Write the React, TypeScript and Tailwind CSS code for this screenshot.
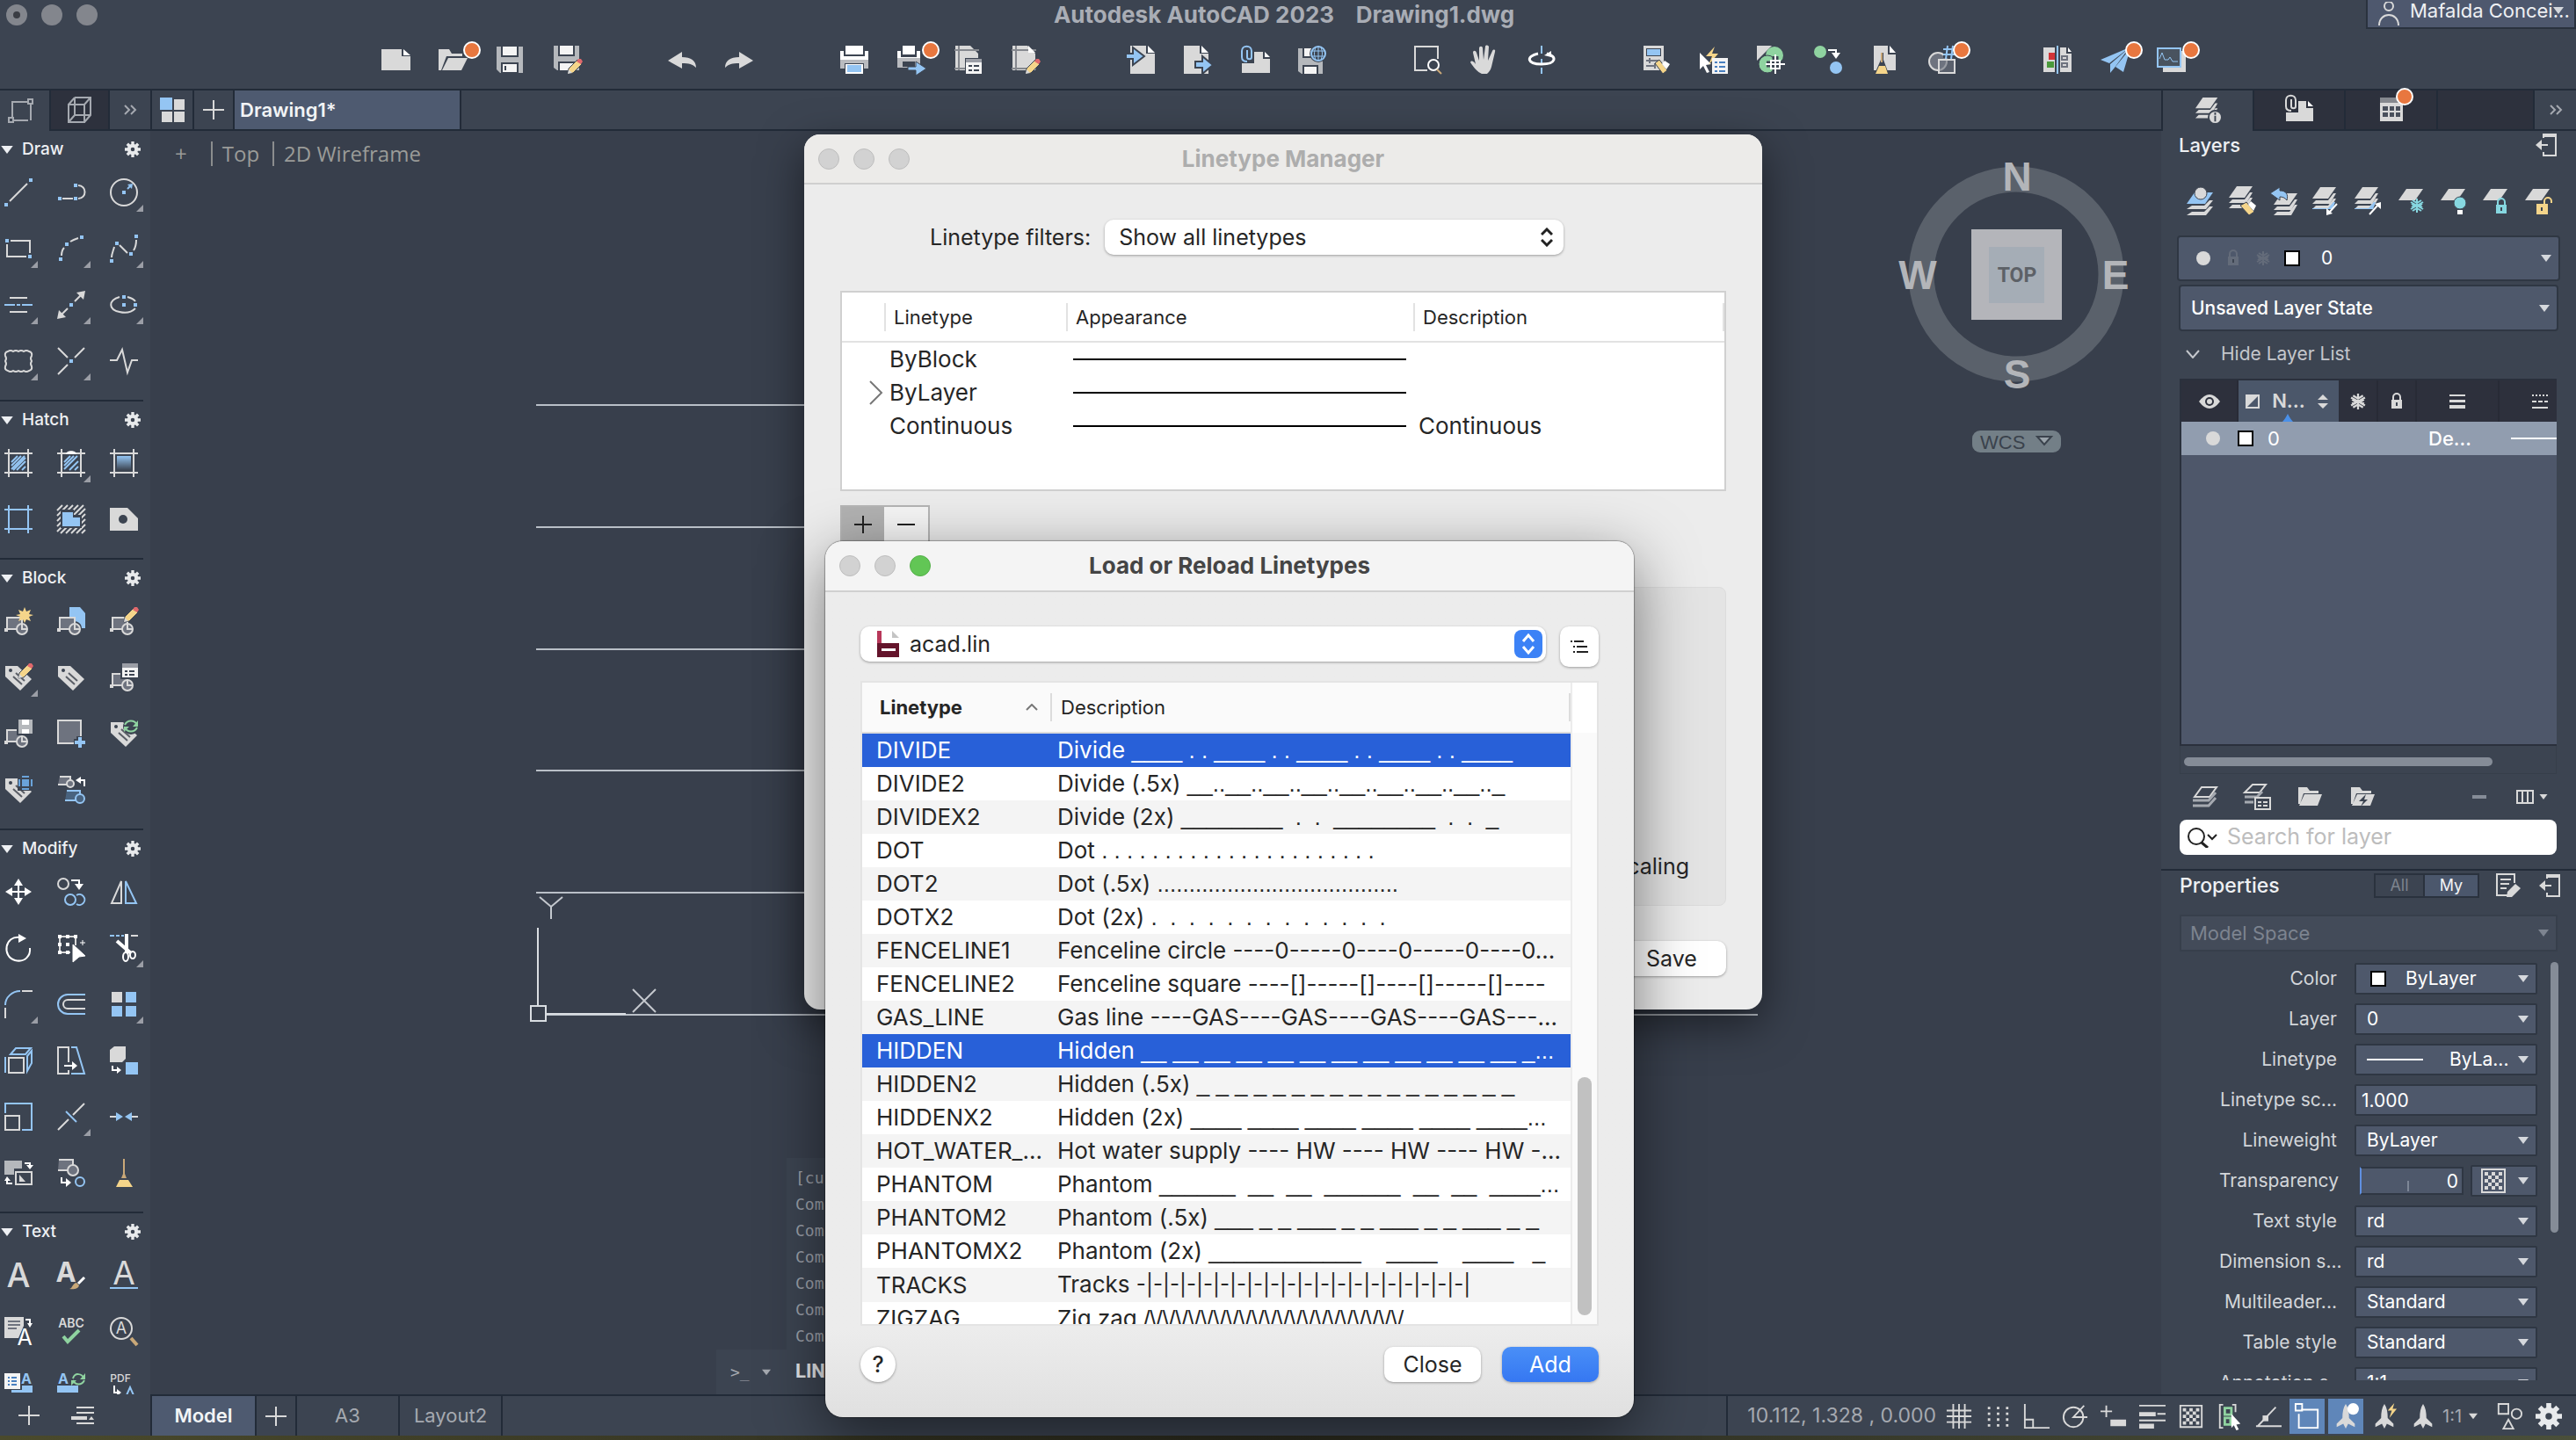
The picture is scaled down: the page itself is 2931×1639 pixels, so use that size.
import type { ReactNode } from 'react';

const L = '#d9d9d9';
const B = '#94c5f3';
const Y = '#f5d58a';
const G = '#8fd3a0';
const M = '#6e737f';
const D = '#3c4451';

const dot = (x: number, y: number) => <rect x={x - 2} y={y - 2} width="4" height="4" fill={B} />;

const badge = <circle cx="38" cy="5" r="9" fill="#e8773f" stroke="#fff" strokeWidth="2" />;

const pencil = (
  <g>
    <path d="M16 17l1-6 10-10 5 5-10 10z" fill={Y} stroke={D} />
    <path d="M26 3l2-3h3l2 3-2 3z" fill="#e0686c" />
    <path d="M16 17l1-5 4 4z" fill={L} />
  </g>
);

const block = (
  <g stroke={L} strokeWidth="2">
    <path d="M3 12h17v13H3z" fill={M} />
    <circle cx="20" cy="25" r="6" fill={M} />
    <path d="M20 19v6h6" fill="none" />
    <rect x="1" y="25" width="2" height="2" fill={L} />
  </g>
);

const tag = (
  <g>
    <path d="M1 3h14l16 15-13 13L1 15z" fill={L} />
    <circle cx="7" cy="8" r="2" fill={D} />
    <path d="M13 11l10 9M10 15l10 9" stroke="#5a5e66" strokeWidth="2" />
  </g>
);

const smallPrinter = (
  <g>
    <path d="M6 0h14v10H6zM0 6h4v7h18V6h4v8H0z" fill="#fff" />
    <path d="M0 14h26v11H0z" fill="#b9bbbf" />
    <path d="M6 18h14v6H6z" fill={D} />
  </g>
);

const layerStack = (
  <g fill={L}>
    <path d="M10 0h18l-9 13H1z" />
    <path d="M5 15h14l6-8h3l-7 12H1z" />
    <path d="M5 21h14l6-8h3l-7 12H1z" />
  </g>
);

const plane = <path d="M11 2h19l-9 13H2z" fill={L} />;

const cropFrame = (c: string) => (
  <path d="M0 5h32M0 27h32M5 0v32M27 0v32" stroke={c} strokeWidth="2" fill="none" />
);

const navArrow = <path d="M16 1c3 4 4 10 4 17l7 7v4l-8-4-3 6-3-6-8 4v-4l7-7c0-7 1-13 4-17z" fill={L} />;

const snow = (c: string) => (
  <path
    d="M8 0v16M1 4l14 8M1 12l14-8M3 2l5 3 5-3M3 14l5-3 5 3M2 6l3 2-3 2M14 6l-3 2 3 2"
    stroke={c}
    strokeWidth="2"
    fill="none"
  />
);

const lock = (c: string) => (
  <g>
    <path d="M4 8V5a4 4 0 0 1 8 0v3" stroke={c} strokeWidth="2" fill="none" />
    <path d="M2 8h12v10H2z" fill={c} />
    <path d="M8 11v4" stroke={D} strokeWidth="2" />
  </g>
);

const checker = (
  <g>
    <path d="M3 3h26v26H3z" fill="none" stroke={L} strokeWidth="2" />
    <path
      d="M6 8h20M6 16h20M6 24h20M10 12h16M10 20h16"
      stroke={L}
      strokeWidth="4"
      strokeDasharray="4 4"
    />
  </g>
);

const icons: Record<string, ReactNode> = {
  newFile: (
    <>
      <path d="M0 4h23v8h10v16H0z" fill={L} />
      <path d="M25 4l8 7h-8z" fill="#fff" />
    </>
  ),
  open: (
    <>
      <path d="M0 4h12l3 5h12v3H9L3 28H0z" fill={L} />
      <path d="M11 14h22l-7 14H4z" fill={L} />
      {badge}
    </>
  ),
  save: (
    <>
      <path d="M1 1h30v30H5l-4-4z" fill="#b5b8bc" />
      <path d="M6 0h20v13H6zM6 19h20v12H6z" fill={D} />
      <path d="M8 1h16v10H8zM8 21h16v9H8z" fill="#f4f4f4" />
      <path d="M11 23v5" stroke={D} strokeWidth="2" />
    </>
  ),
  saveAs: (
    <>
      <path d="M1 0h29v28H5l-4-3z" fill="#b5b8bc" />
      <path d="M6 0h19v12H6zM6 18h19v10H6z" fill={D} />
      <path d="M8 0h15v10H8zM8 20h15v8H8z" fill="#f4f4f4" />
      <g transform="translate(1 15)">{pencil}</g>
    </>
  ),
  undo: <path d="M0 17L16 7v6c10 0 16 4 16 12-4-4-8-5-16-5v6z" fill={L} />,
  redo: <path d="M32 17L16 7v6C6 13 0 17 0 25c4-4 8-5 16-5v6z" fill={L} />,
  print: (
    <>
      <path d="M6 0h20v10H6z" fill="#fff" />
      <path d="M0 6h4v6h24V6h4v10H0z" fill="#fff" />
      <path d="M0 16h32v10H0z" fill="#b9bbbf" />
      <path d="M5 20h22v6H5z" fill={D} />
      <path d="M6 21h20v11H6z" fill="#fff" />
      <path d="M8 22h16v8H8z" fill={B} />
    </>
  ),
  batchPlot: (
    <>
      {smallPrinter}
      <path d="M12 24h9v-6l12 8-12 8v-6h-9z" fill={B} stroke={D} />
      {badge}
    </>
  ),
  pageSetup: (
    <>
      <path d="M1 0h17l9 9v19H1z" fill={L} />
      <path d="M0 5h28M0 26h28M5 0v28" stroke="#85888e" strokeWidth="2" />
      <path d="M12 14h20v18H12z" fill={D} />
      <path d="M13 15h18v17H13z" fill="#f4f4f4" />
      <path d="M13 15h18v4H13z" fill="#9b9ea6" />
      <path d="M16 23h4m2 0h6M16 28h4m2 0h6" stroke={D} strokeWidth="2" />
    </>
  ),
  editSheet: (
    <>
      <path d="M1 0h17l9 9v19H1z" fill={L} />
      <path d="M0 5h28M0 26h28M5 0v28" stroke="#85888e" strokeWidth="2" />
      <path d="M19 0l8 8h-8z" fill="#fff" />
      <g transform="translate(0 15)">{pencil}</g>
    </>
  ),
  importFile: (
    <>
      <path d="M4 0h18v9h10v23H4z" fill={L} />
      <path d="M24 0l8 8h-8z" fill="#fff" />
      <path d="M-1 9h8V2l13 10-13 10v-7h-8z" fill={B} stroke={D} strokeWidth="2" />
    </>
  ),
  exportFile: (
    <>
      <path d="M0 0h18v9h10v23H0z" fill={L} />
      <path d="M20 0l8 8h-8z" fill="#fff" />
      <path d="M13 18h8v-6l12 10-12 10v-7h-8z" fill={B} stroke={D} strokeWidth="2" />
    </>
  ),
  attach: (
    <>
      <path d="M15 7h10v8h8v16H1V20h14z" fill={L} />
      <path d="M27 7l6 6h-6z" fill="#fff" />
      <path d="M7 5v8c0 3 5 3 5 0V6c0-7-11-7-11 0v7c0 4 3 5 6 5" stroke={B} strokeWidth="2" fill="none" />
    </>
  ),
  saveWeb: (
    <>
      <path d="M0 3h28v29H4l-4-3z" fill="#b5b8bc" />
      <path d="M5 3h18v11H5zM5 22h18v10H5z" fill={D} />
      <path d="M7 3h8v9H7zM7 24h14v8H7z" fill="#f4f4f4" />
      <circle cx="23" cy="9" r="10" fill={D} />
      <circle cx="23" cy="9" r="8" fill="none" stroke={B} strokeWidth="2" />
      <path d="M15 6h16M15 12h16M23 1v16M20 2c-2 5-2 9 0 14M26 2c2 5 2 9 0 14" stroke={B} fill="none" />
    </>
  ),
  zoomWindow: (
    <>
      <path d="M16 28H2V1h26v14" stroke={L} strokeWidth="2" fill="none" />
      <circle cx="23" cy="22" r="6" stroke="#fff" strokeWidth="2" fill="none" />
      <path d="M27 27l5 5" stroke="#c9a878" strokeWidth="2" />
    </>
  ),
  pan: (
    <path
      d="M13 32C8 30 4 25 0 19c1-3 4-1 6 2L3 8c0-3 3-3 4 0l3 9L10 3c0-3 4-3 4 0l1 13L17 1c0-2 3-2 4 0l-1 16 5-11c1-2 4-2 3 1l-4 17c-1 4-3 6-5 8z"
      fill={L}
    />
  ),
  orbit: (
    <>
      <path d="M16 0v9M16 15v5M16 25v7" stroke={B} strokeWidth="2" />
      <path d="M12 9C-2 12-1 21 16 21s18-9 6-12" stroke="#fff" strokeWidth="3" fill="none" />
      <path d="M19 11l8-5v7z" fill="#fff" />
    </>
  ),
  toolSettings: (
    <>
      <path d="M1 0h23v28H1z" fill={L} />
      <path d="M4 3h17v9H4z" fill={D} />
      <path d="M5 4h15v7H5z" fill={B} />
      <path d="M4 17h14M8 14v6M4 23h10M14 20v6" stroke="#6e737f" strokeWidth="2" />
      <path d="M14 20l5-4 9 12-5 4z" fill={Y} stroke={D} />
      <path d="M25 17l6 4-4 6-5-6z" fill="#fff" />
    </>
  ),
  quickSelect: (
    <>
      <path d="M0 8l13 13-6 1 4 8-3 1-4-8-4 4z" fill="#fff" />
      <path d="M17 1L7 12h7l-4 10 11-13h-7z" fill={Y} />
      <path d="M14 14h18v18H14z" fill="#f4f4f4" />
      <path d="M17 19h3m2 0h7M17 24h3m2 0h7M17 29h3m2 0h7" stroke="#4a80bf" strokeWidth="2" />
    </>
  ),
  compareDwg: (
    <>
      <path d="M0 0h17L0 17z" fill={L} />
      <circle cx="20" cy="11" r="10" fill={G} />
      <circle cx="12" cy="21" r="10" fill={G} stroke={D} />
      <path d="M21 12v20M11 21h21" stroke={D} strokeWidth="7" />
      <path d="M21 10v22M10 21h22M16 17h10v9H16z" stroke="#fff" strokeWidth="2" fill="none" />
    </>
  ),
  matchPoints: (
    <>
      <circle cx="7" cy="7" r="7" fill={G} />
      <circle cx="25" cy="25" r="7" fill={B} />
      <path d="M16 5h9v5" stroke="#fff" strokeWidth="2" fill="none" />
      <path d="M20 8h10l-5 7z" fill="#fff" />
    </>
  ),
  purge: (
    <>
      <path d="M3 0h16v10h9v18H3z" fill={L} />
      <path d="M21 0l7 8h-7z" fill="#fff" />
      <path d="M11 8v8l-7 16h16l-6-16V8z" fill={D} />
      <path d="M12 8v11" stroke="#c9a878" strokeWidth="2" />
      <path d="M9 23h7l3 9H5z" fill={Y} />
    </>
  ),
  count: (
    <>
      <circle cx="11" cy="18" r="10" fill={M} stroke={L} strokeWidth="2" />
      <path d="M12 16h18v15H12z" fill="#6e737f99" stroke={L} strokeWidth="2" />
      <path d="M17 0h16v14H17z" fill={D} />
      <path d="M17 4h14M17 10h14M22 0l-2 15M28 0l-2 15" stroke={B} strokeWidth="2" />
      {badge}
    </>
  ),
  dwgCompare: (
    <>
      <path d="M0 2h13v28H0zM19 2h7v7h6v21H19z" fill={L} />
      <path d="M28 2l4 5h-4z" fill="#fff" />
      <path d="M6 8h7v8H6z" fill="#d13438" />
      <path d="M4 18h8v7H4z" fill="#4a9a3c" />
      <path d="M21 12h6v4h-6zM21 20h6v4h-6z" stroke="#6e737f" strokeWidth="2" fill="none" />
      <path d="M16 0v32" stroke={B} strokeWidth="2" />
    </>
  ),
  send: (
    <>
      <path d="M33 2L0 16l10 4zM32 3L11 21v10l5-6zM34 3L17 24l9 6z" fill={B} />
      {badge}
    </>
  ),
  activity: (
    <>
      <path d="M6 6h26v24H6z" fill={L} />
      <path d="M0 3h26v21H0z" fill="#49535f" stroke={B} strokeWidth="2" />
      <path d="M2 15l3-7 3 8h4l2-3 3 5h6" stroke={B} fill="none" />
      {badge}
    </>
  ),
  line: <>{dot(2, 30)}{dot(30, 2)}<path d="M6 26L26 6" stroke={L} strokeWidth="2" /></>,
  polyline: (
    <>
      {dot(3, 23)}{dot(21, 23)}{dot(21, 8)}
      <path d="M6 23h12M24 8c10 0 10 15 0 15" stroke={L} strokeWidth="2" fill="none" />
    </>
  ),
  circle: (
    <>
      <circle cx="16" cy="16" r="15" stroke={L} strokeWidth="2" fill="none" />
      {dot(16, 16)}
      <path d="M20 12l3-3" stroke={B} strokeWidth="2" />
      <path d="M20 7l6-1-1 6z" fill={B} />
    </>
  ),
  rectangle: <>{dot(3, 7)}{dot(29, 25)}<path d="M7 7h22v14M25 25H3V11" stroke={L} strokeWidth="2" fill="none" /></>,
  arc: (
    <>
      {dot(4, 28)}{dot(11, 11)}{dot(28, 3)}
      <path d="M5 24c0-4 1-7 3-9M15 8c3-2 6-3 9-4" stroke={L} strokeWidth="2" fill="none" />
    </>
  ),
  spline: (
    <>
      {dot(2, 30)}{dot(8, 10)}{dot(24, 22)}{dot(30, 2)}
      <path d="M2 26c0-4 2-8 3-12M11 12l9 9M27 18c2-3 3-7 3-12" stroke={L} strokeWidth="2" fill="none" />
    </>
  ),
  multiline: (
    <>
      <path d="M6 8h20M6 24h20" stroke={L} strokeWidth="2" />
      <path d="M0 16h12m2 0h4m2 0h12" stroke={B} strokeWidth="2" />
    </>
  ),
  ray: (
    <>
      {dot(16, 16)}
      <path d="M20 12l8-8M12 20l-8 8" stroke={L} strokeWidth="2" />
      <path d="M32 0l-2 10-8-8zM0 32l2-10 8 8z" fill={L} />
    </>
  ),
  ellipse: (
    <>
      <path d="M11 7C-2 11-2 21 11 24c8 2 14 0 18-4M20 7c4 1 7 2 9 5" stroke={L} strokeWidth="2" fill="none" />
      {dot(16, 7)}{dot(16, 16)}{dot(29, 16)}
    </>
  ),
  cloud: (
    <path
      d="M4 5q3-2 6 0q3-2 6 0q3-2 6 0q3-2 6 0q4 1 3 5q-2 3 0 6q-2 3 0 6q1 4-3 5q-3 2-6 0q-3 2-6 0q-3 2-6 0q-3 2-6 0q-4-1-3-5q2-3 0-6q2-3 0-6q-1-4 3-5z"
      stroke={L}
      strokeWidth="2"
      fill="none"
    />
  ),
  trimX: <>{dot(16, 16)}<path d="M1 1l11 11M20 12L31 1M12 20L1 31" stroke={L} strokeWidth="2" /></>,
  breakLine: <path d="M0 15h8l6-12 6 26 5-14h7" stroke={L} strokeWidth="2" fill="none" />,
  hatch: <>{cropFrame(L)}<path d="M8 15l7-7M8 23L23 8M14 24l10-10M20 24l4-4M8 19L19 8M10 24l14-14" stroke={B} strokeWidth="2" /></>,
  hatchEdit: (
    <>
      {cropFrame(L)}
      <path d="M8 15l7-7M8 23L23 8M14 24l10-10M20 24l4-4M8 19L19 8" stroke={B} strokeWidth="2" />
      <path d="M10 6c0-5 12-5 12 0z" fill="#fff" />
    </>
  ),
  gradient: (
    <>
      <defs>
        <linearGradient id="fade" x1="0" y1="0" x2="0" y2="1">
          <stop offset="0" stopColor="#94c5f3" />
          <stop offset="1" stopColor="#3c4451" />
        </linearGradient>
      </defs>
      {cropFrame(L)}
      <path d="M8 8h16v16H8z" fill="url(#fade)" />
    </>
  ),
  boundary: cropFrame(B),
  region: (
    <>
      <path
        d="M0 6l6-6M0 12L12 0M0 18L18 0M0 24L24 0M0 30L30 0M4 32L32 4M10 32l22-22M16 32l16-16M22 32l10-10M28 32l4-4"
        stroke={L}
        strokeWidth="2"
      />
      <path d="M4 5h15v6h9v15H4z" fill={D} />
      <path d="M6 8h12v6h8v10H6z" fill={B} />
    </>
  ),
  wipeout: <><path d="M0 3h20l12 12v14H0z" fill={L} /><circle cx="15" cy="16" r="5" fill={D} /></>,
  blockCreate: <>{block}<path d="M23 0l2 5 5-2-2 5 5 1-5 2 2 5-5-2-2 4-2-4-5 2 2-5-5-2 5-1-2-5 5 2z" fill={Y} /></>,
  blockInsert: <><path d="M14 0h12l6 7v17h-4c0-5-4-8-9-8h-5z" fill={B} />{block}</>,
  blockEdit: <>{block}{pencil}</>,
  tagEdit: <>{tag}{pencil}</>,
  tag,
  blockProps: (
    <>
      {block}
      <path d="M12 0h20v18H12z" fill={D} />
      <path d="M14 0h18v16H14z" fill="#f4f4f4" />
      <path d="M14 0h18v5H14z" fill="#9b9ea6" />
      <path d="M17 9h3m2 0h6M17 13h3m2 0h6" stroke={D} strokeWidth="2" />
    </>
  ),
  blockSave: (
    <>
      {block}
      <path d="M14 0h18v18H14z" fill={D} />
      <path d="M16 0h16v16H16z" fill="#b5b8bc" />
      <path d="M20 0h8v6h-8zM20 11h8v5h-8z" fill="#fff" />
    </>
  ),
  addArea: (
    <>
      <path d="M1 1h26v26H1z" fill={M} stroke={L} strokeWidth="2" />
      <path d="M26 19v14M19 26h14" stroke={D} strokeWidth="8" />
      <path d="M26 20v12M20 26h12" stroke={B} strokeWidth="4" />
    </>
  ),
  tagSync: (
    <>
      {tag}
      <circle cx="24" cy="8" r="9" fill={D} />
      <path d="M17 6c3-6 11-6 14 0M31 9c-3 6-11 6-14 0" stroke={G} strokeWidth="2" fill="none" />
      <path d="M32 1v7h-6zM16 14V8h6z" fill={G} />
    </>
  ),
  tagBlock: (
    <>
      {tag}
      <path d="M15 0h17v17H15z" fill={D} />
      <path d="M20 4h8v8h-8z" fill="#6aa3da" />
      <path d="M20 1h8M20 15h8M17 4v8M31 4v8" stroke="#6aa3da" strokeWidth="2" />
    </>
  ),
  blockReplace: (
    <>
      <g fill={M} stroke={L} strokeWidth="2">
        <path d="M3 1h12v9H1" />
        <circle cx="15" cy="9" r="4" />
      </g>
      <path d="M31 12V5h-6" stroke="#fff" strokeWidth="2" fill="none" />
      <path d="M21 5l6-4v8z" fill="#fff" />
      <g fill="#49637f" stroke={B} strokeWidth="2">
        <path d="M11 17h15v11H9" />
        <circle cx="26" cy="26" r="5" />
      </g>
    </>
  ),
  move: (
    <>
      <path d="M16 4v24M4 16h24" stroke="#fff" strokeWidth="2" />
      <path d="M16 1l5 8H11zM16 31l5-8H11zM1 16l8-5v10zM31 16l-8-5v10z" fill="#fff" />
    </>
  ),
  copy: (
    <>
      <circle cx="7" cy="7" r="6" stroke={L} strokeWidth="2" fill="none" />
      <path d="M16 3h9v5" stroke="#fff" strokeWidth="2" fill="none" />
      <path d="M20 7h10l-5 7z" fill="#fff" />
      <circle cx="15" cy="25" r="6" stroke={B} strokeWidth="2" fill="none" />
      <path d="M22 20a6 6 0 1 1 0 10" stroke={B} strokeWidth="2" fill="none" />
    </>
  ),
  mirror: (
    <>
      <path d="M13 4v25H2z" stroke={L} strokeWidth="2" fill="none" />
      <path d="M18 4v25h12z" stroke={B} strokeWidth="2" fill="none" />
    </>
  ),
  rotate: (
    <>
      <path d="M18 4C0 1-3 26 12 30c12 3 18-6 17-14" stroke="#fff" strokeWidth="2" fill="none" />
      <path d="M16 0l9 5-9 5z" fill="#fff" />
    </>
  ),
  stretch: (
    <>
      <path d="M3 3h18v10M3 3v18h12" stroke={L} strokeWidth="2" fill="none" />
      <path d="M1 1h4v4H1zM10 1h4v4h-4zM19 1h4v4h-4zM1 10h4v4H1zM10 10h4v4h-4zM1 19h4v4H1zM10 19h4v4h-4z" fill="#fff" />
      <path d="M18 12l14 13-7 1-7 6zM29 7v6M26 10h6" fill="#fff" stroke="#fff" strokeWidth="1" />
    </>
  ),
  trim: (
    <>
      <path d="M0 2h5m2 0h4m2 0h3" stroke={B} strokeWidth="2" />
      <path d="M24 2h8" stroke={L} strokeWidth="2" />
      <path d="M19 0v22M8 8l16 14" stroke="#fff" strokeWidth="4" />
      <ellipse cx="18" cy="26" rx="3" ry="5" stroke="#fff" strokeWidth="2" fill={D} />
      <ellipse cx="26" cy="24" rx="3" ry="4" stroke="#fff" strokeWidth="2" fill={D} />
    </>
  ),
  fillet: <><path d="M1 17C1 8 9 1 18 1" stroke={B} strokeWidth="2" fill="none" /><path d="M20 1h12M1 20v12" stroke={L} strokeWidth="2" /></>,
  offset: (
    <>
      <path d="M32 5H12a11 11 0 0 0 0 22h20" stroke={B} strokeWidth="2" fill="none" />
      <path d="M32 11H12a5 5 0 0 0 0 10h20" stroke={L} strokeWidth="2" fill="none" />
    </>
  ),
  array: <><path d="M2 2h12v12H2z" fill={L} /><path d="M18 2h12v12H18zM2 18h12v12H2zM18 18h12v12H18z" fill={B} /></>,
  extrude: (
    <>
      <path d="M5 13h17v17H5z" stroke={L} strokeWidth="2" fill="none" />
      <path d="M1 12v18M7 9l6-7h17l-6 7zM26 11l5-6v14l-5 9z" stroke={B} strokeWidth="2" fill="none" />
    </>
  ),
  taper: (
    <>
      <path d="M13 18V1H1v30h12v-4" stroke={L} strokeWidth="2" fill="none" />
      <path d="M16 1h6l9 30H16" stroke={B} strokeWidth="2" fill="none" />
      <path d="M8 22h10" stroke="#fff" strokeWidth="2" />
      <path d="M17 17l6 5-6 5z" fill="#fff" />
    </>
  ),
  flatten: (
    <>
      <path d="M0 4l5-4h13v14l-4 4H0z" fill={L} />
      <path d="M18 18h14v14H18z" fill={B} />
      <path d="M3 22v5h6" stroke="#fff" strokeWidth="2" fill="none" />
      <path d="M8 23l5 4-5 4z" fill="#fff" />
    </>
  ),
  scale: (
    <>
      <path d="M1 12V1h30v30H20" stroke={B} strokeWidth="2" fill="none" />
      <path d="M1 15h16v16H1z" stroke={L} strokeWidth="2" fill="none" />
    </>
  ),
  breakAt: <><path d="M1 31l12-12M18 14L31 1" stroke={L} strokeWidth="2" /><path d="M10 10l12 12" stroke={B} strokeWidth="2" /></>,
  join: <><path d="M0 16h8M24 16h8" stroke={L} strokeWidth="2" /><path d="M7 11l8 5-8 5zM25 11l-8 5 8 5z" fill={B} /></>,
  drawOrder: (
    <>
      <path d="M0 2h20v9h-9v7H0z" fill="#b5b8bc" />
      <path d="M13 15h18v14H13z" stroke={L} strokeWidth="2" fill="none" />
      <path d="M17 18l7 8h-7z" fill={L} />
      <path d="M23 5h6v3M3 24v4h6" stroke="#fff" strokeWidth="2" fill="none" />
      <path d="M25 7h8l-4 5zM0 25h7l-4-5z" fill="#fff" />
    </>
  ),
  explode: (
    <>
      <g fill={M} stroke={L} strokeWidth="2">
        <path d="M2 1h16v12H1" />
        <circle cx="18" cy="13" r="6" />
      </g>
      <path d="M5 21v6h6" stroke="#fff" strokeWidth="2" fill="none" />
      <path d="M10 22l6 5-6 5z" fill="#fff" />
      <circle cx="26" cy="26" r="5" stroke={B} strokeWidth="2" fill="none" />
    </>
  ),
  broom: (
    <>
      <path d="M16 0v18" stroke="#c9a878" strokeWidth="2" />
      <path d="M13 22l2-5h2l2 5z" fill="#c9a878" />
      <path d="M11 24h10l5 8H7z" fill={Y} />
    </>
  ),
  text: <text x="16" y="30" fontSize="38" fontWeight="500" textAnchor="middle" fill={L}>A</text>,
  textStyle: (
    <>
      <text x="10" y="24" fontSize="31" fontWeight="700" textAnchor="middle" fill={L}>A</text>
      <path d="M24 26l7-7" stroke="#fff" strokeWidth="3" />
      <path d="M14 32c4-1 3-6 8-7l3 3c-1 4-6 5-11 4z" fill="#c9a878" />
    </>
  ),
  textLine: (
    <>
      <text x="16" y="27" fontSize="37" textAnchor="middle" fill={L}>A</text>
      <path d="M0 31h32" stroke={B} strokeWidth="2" />
    </>
  ),
  textConvert: (
    <>
      <path d="M0 0h22v10l-6 14H0z" fill={L} />
      <path d="M4 5h14M4 9h14M4 13h10" stroke="#6e737f" strokeWidth="2" />
      <path d="M24 3h5v5" stroke="#fff" strokeWidth="2" fill="none" />
      <path d="M26 7h6l-3 5z" fill="#fff" />
      <text x="23" y="32" fontSize="25" textAnchor="middle" fill="#fff">A</text>
    </>
  ),
  spell: (
    <>
      <text x="16" y="12" fontSize="14" fontWeight="600" textAnchor="middle" fill={L}>ABC</text>
      <path d="M7 22l5 6 13-13" stroke={G} strokeWidth="4" fill="none" />
    </>
  ),
  findText: (
    <>
      <circle cx="13" cy="13" r="12" stroke={L} strokeWidth="2" fill="none" />
      <text x="13" y="19" fontSize="18" textAnchor="middle" fill={L}>A</text>
      <path d="M24 24l7 8" stroke="#c9a878" strokeWidth="4" />
    </>
  ),
  textList: (
    <>
      <path d="M20 14h12v8H8v-3h12z" fill={B} />
      <path d="M0 0h18v18H0z" fill="#f4f4f4" />
      <path d="M4 5h2m2 0h6M4 9h2m2 0h6M4 13h2m2 0h6" stroke="#4a80bf" strokeWidth="2" />
      <text x="25" y="12" fontSize="16" fontWeight="700" textAnchor="middle" fill={B}>A</text>
    </>
  ),
  textUpdate: (
    <>
      <path d="M0 14h24v8H0z" fill={B} />
      <text x="7" y="12" fontSize="16" fontWeight="700" textAnchor="middle" fill={B}>A</text>
      <path d="M18 6c2-7 10-6 13 0M31 8c-3 6-10 6-13 0" stroke={G} strokeWidth="2" fill="none" />
      <path d="M32 0v7h-6zM16 14V8h6z" fill={G} />
    </>
  ),
  pdfText: (
    <>
      <text x="12" y="10" fontSize="12" fontWeight="500" textAnchor="middle" fill={L}>PDF</text>
      <path d="M5 14v8h6" stroke="#fff" strokeWidth="2" fill="none" />
      <path d="M8 18l5 4-5 4z" fill="#fff" />
      <path d="M19 25l4-9 4 9" stroke={B} strokeWidth="2" fill="none" />
    </>
  ),
  layerStates: (
    <>
      <path d="M10 6h21l-9 13H1z" fill={B} />
      <circle cx="17" cy="7" r="7" fill={L} stroke={D} />
      <path d="M7 21h14l6-6h4l-8 10H1zM7 28h14l6-6h4l-8 10H1z" fill={L} />
    </>
  ),
  layerWalk: (
    <>
      <g transform="translate(0 -1)">{layerStack}</g>
      <path d="M14 21l7-4 9 11-6 4z" fill={Y} stroke={D} />
      <path d="M26 16l6 5-3 6-6-7z" fill="#fff" />
    </>
  ),
  layerPrev: (
    <>
      <g transform="translate(3 7)">{layerStack}</g>
      <path d="M0 7l11-7v4c7 0 10 4 8 11-2-3-5-4-8-4v4z" fill={B} stroke={D} />
    </>
  ),
  layerIn: (
    <>
      <g transform="translate(-1 0)">{layerStack}</g>
      <path d="M0 24h18l6-7h2l-3 8H0z" fill={B} />
      <path d="M28 19l-9 10" stroke="#fff" strokeWidth="2" />
      <path d="M16 32v-8l7 6z" fill="#fff" />
    </>
  ),
  layerOut: (
    <>
      <g transform="translate(-1 0)">{layerStack}</g>
      <path d="M0 24h16l6-7h2l-3 8H0z" fill={B} />
      <path d="M17 31l10-11" stroke="#fff" strokeWidth="2" />
      <path d="M30 17v8l-7-6z" fill="#fff" />
    </>
  ),
  layerFreeze: <>{plane}<g transform="translate(15 13)">{snow('#86d7e0')}</g></>,
  layerOff: (
    <>
      {plane}
      <circle cx="24" cy="18" r="7" fill="#86d7e0" stroke={D} />
      <path d="M21 26h6v5h-6z" fill="#fff" />
    </>
  ),
  layerLock: <>{plane}<g transform="translate(15 12)">{lock('#86d7e0')}</g></>,
  layerUnlock: (
    <>
      {plane}
      <path d="M24 20v-4a4 4 0 0 1 8 0v2" stroke={Y} strokeWidth="2" fill="none" />
      <path d="M15 19h13v12H15z" fill={Y} />
      <path d="M21 23v4" stroke={D} strokeWidth="2" />
    </>
  ),
  layerOutline: (
    <>
      <path d="M13 5h17l-8 11H5z" stroke={L} strokeWidth="2" fill="none" />
      <path d="M3 20h18l8-9M3 26h18l8-9" stroke="#a5a9b0" strokeWidth="3" fill="none" />
    </>
  ),
  layerDetail: (
    <>
      <path d="M11 2h15l-7 9H2z" stroke={L} strokeWidth="2" fill="none" />
      <path d="M2 16h14l6-6M2 22h10" stroke="#a5a9b0" strokeWidth="3" fill="none" />
      <path d="M14 17h17v13H14z" fill={D} stroke={L} strokeWidth="2" />
      <path d="M17 22h4m2 0h5M17 26h4m2 0h5" stroke={L} strokeWidth="2" />
    </>
  ),
  folder: <path d="M3 5h10l3 4h10v3H9L5 24H3zM10 13h20l-5 13H4z" fill={L} />,
  folderFilter: (
    <>
      <path d="M3 5h10l3 4h10v3H9L5 24H3zM10 13h20l-5 13H4z" fill={L} />
      <path d="M20 13l-8 8h5l-3 6 8-8h-4z" fill={D} />
    </>
  ),
  layersTab: (
    <>
      {layerStack}
      <circle cx="25" cy="24" r="8" fill={L} stroke={D} strokeWidth="2" />
      <path d="M25 18v3M25 22v7" stroke={D} strokeWidth="2" />
    </>
  ),
  attachTab: (
    <>
      <path d="M15 6h9v8h8v15H1V19h14z" fill={L} />
      <path d="M26 6l6 6h-6z" fill="#fff" />
      <path d="M7 4v8c0 3 5 3 5 0V5c0-7-11-7-11 0v7c0 4 3 5 6 5" stroke={L} strokeWidth="2" fill="none" />
    </>
  ),
  sheetTab: (
    <>
      <path d="M3 2h26v27H3z" fill={L} />
      <path d="M3 2h26v6H3z" fill="#85888e" />
      <path d="M6 12h6v5H6zM14 12h5v5h-5zM21 12h5v5h-5zM6 19h6v5H6zM14 19h5v5h-5zM21 19h5v5h-5z" fill="#49505c" />
      <circle cx="31" cy="1" r="9" fill="#e8773f" stroke="#fff" strokeWidth="2" />
    </>
  ),
  dock: (
    <>
      <path d="M13 8V4h14v24H13v-4" stroke={L} strokeWidth="2" fill="none" />
      <path d="M13 3h15v4H13z" fill={L} />
      <path d="M8 16h10" stroke={L} strokeWidth="2" />
      <path d="M11 10v12l-7-6z" fill={L} />
    </>
  ),
  propsEdit: (
    <>
      <path d="M16 27H4V3h20v10" stroke={L} strokeWidth="2" fill="none" />
      <path d="M8 9h12M8 14h10M8 19h7" stroke={L} strokeWidth="2" />
      <path d="M15 29l1-6 9-9 6 5-10 10z" fill={L} />
    </>
  ),
  rectTool: (
    <>
      <path d="M5 6h22M27 9v18M24 27H7M6 23V6" stroke="#a5a9b0" strokeWidth="2" />
      <path d="M24 3h5v5h-5zM2 24h5v5H2z" stroke="#a5a9b0" strokeWidth="2" fill={D} />
    </>
  ),
  cube: (
    <path
      d="M3 10h18v20H3zM10 2h18v20l-7 8M3 10l7-8M21 10l7-8M10 2v20l-7 8M10 22h18"
      stroke="#a5a9b0"
      strokeWidth="2"
      fill="none"
    />
  ),
  grid4: (
    <>
      <path d="M2 2h14v14H2z" fill={B} />
      <path d="M18 4h12v12H18zM4 18h12v12H4zM18 18h12v12H18z" fill={L} />
    </>
  ),
  gridMode: <path d="M9 1v30M16 1v30M23 1v30M1 9h30M1 16h30M1 23h30" stroke={L} strokeWidth="2" />,
  snapMode: <path d="M4 6h26M4 13h26M4 20h26M4 27h26" stroke={L} strokeWidth="3" strokeDasharray="3 8" />,
  ortho: <path d="M2 1v29h30M2 20h10v10" stroke={L} strokeWidth="2" fill="none" />,
  polar: <><circle cx="14" cy="17" r="12" stroke={L} strokeWidth="2" fill="none" /><path d="M31 17H14L27 3" stroke={L} strokeWidth="2" fill="none" /></>,
  dynInput: <><path d="M7 3v14M0 10h14" stroke={L} strokeWidth="2" /><path d="M12 20h19v8H12z" fill={L} /></>,
  lineweight: <path d="M0 2h32v2H0zM0 11h20v5H0zM22 12h10v2H22zM0 20h32v2H0zM0 25h18v6H0z" fill={L} />,
  checker,
  cycling: (
    <>
      <path d="M8 2H4v28h4M19 2h4v9" stroke={L} strokeWidth="2" fill="none" />
      <path d="M10 6h8v8h-8zM10 18h7v8h-7z" stroke={G} strokeWidth="3" fill="none" />
      <path d="M18 13l11 12-5 1 3 6-3 1-3-6-3 3z" fill="#fff" />
    </>
  ),
  otrack: <><path d="M1 28h31M3 28L25 5" stroke={L} strokeWidth="2" /><path d="M9 15h7v7H9z" fill={L} /></>,
  osnap: <><path d="M9 8h20v22H6V13" stroke="#fff" strokeWidth="2" fill="none" /><path d="M2 1h8v8H2z" stroke="#fff" strokeWidth="2" fill="none" /></>,
  annoAll: <>{navArrow}<circle cx="25" cy="7" r="7" fill="#fff" /></>,
  annoAuto: <>{navArrow}<path d="M28 0l-8 9h5l-3 9 9-11h-5z" fill={Y} /></>,
  annoScale: navArrow,
  workspace: (
    <>
      <path d="M3 1h12v12H3z" stroke={L} strokeWidth="2" fill="none" />
      <circle cx="25" cy="13" r="6" stroke={L} strokeWidth="2" fill="none" />
      <path d="M15 20l6 11H9z" stroke={L} strokeWidth="2" fill="none" />
    </>
  ),
  gear: (
    <>
      <path d="M16 0v32M0 16h32M5 5l22 22M27 5L5 27" stroke="#e8eaec" strokeWidth="6" />
      <circle cx="16" cy="16" r="11" fill="#e8eaec" />
      <circle cx="16" cy="16" r="4" fill={D} />
    </>
  ),
};

function Icon({ name, className = 'size-8' }: { name: string; className?: string }) {
  return (
    <svg viewBox="0 0 32 32" className={`${className} shrink-0 overflow-visible`} aria-hidden="true">
      {icons[name]}
    </svg>
  );
}

function Caret({ className = 'h-2 w-3 fill-[#d5d8dd]' }: { className?: string }) {
  return (
    <svg viewBox="0 0 12 8" className={`${className} shrink-0`} aria-hidden="true">
      <path d="M0 0h12L6 8z" />
    </svg>
  );
}

function More() {
  return (
    <svg viewBox="0 0 16 12" className="mx-auto h-3 w-4" fill="none" stroke="#a5a9b0" strokeWidth="2">
      <path d="M2 1l5 5-5 5M9 1l5 5-5 5" />
    </svg>
  );
}

const toolbarGroups = [
  ['newFile', 'open', 'save', 'saveAs'],
  ['undo', 'redo'],
  ['print', 'batchPlot', 'pageSetup', 'editSheet'],
  ['importFile', 'exportFile', 'attach', 'saveWeb'],
  ['zoomWindow', 'pan', 'orbit'],
  ['toolSettings', 'quickSelect', 'compareDwg', 'matchPoints', 'purge', 'count'],
  ['dwgCompare', 'send', 'activity'],
];

// a trailing "+" marks tools that open a flyout
const palettes = [
  {
    title: 'Draw',
    tools: ['line', 'polyline', 'circle+', 'rectangle+', 'arc+', 'spline+', 'multiline+', 'ray+', 'ellipse+', 'cloud+', 'trimX+', 'breakLine'],
  },
  { title: 'Hatch', tools: ['hatch', 'hatchEdit+', 'gradient', 'boundary', 'region', 'wipeout'] },
  {
    title: 'Block',
    tools: ['blockCreate', 'blockInsert', 'blockEdit', 'tagEdit+', 'tag', 'blockProps', 'blockSave', 'addArea', 'tagSync', 'tagBlock', 'blockReplace'],
  },
  {
    title: 'Modify',
    tools: ['move', 'copy', 'mirror', 'rotate', 'stretch', 'trim+', 'fillet+', 'offset', 'array+', 'extrude', 'taper', 'flatten', 'scale', 'breakAt+', 'join', 'drawOrder', 'explode', 'broom'],
  },
  {
    title: 'Text',
    tools: ['text', 'textStyle', 'textLine', 'textConvert', 'spell', 'findText', 'textList', 'textUpdate', 'pdfText'],
  },
];

const layerTools = ['layerStates', 'layerWalk', 'layerPrev', 'layerIn', 'layerOut', 'layerFreeze', 'layerOff', 'layerLock', 'layerUnlock'];

const linetypes = [
  { name: 'DIVIDE', label: 'Divide ', pattern: '____ . . ____ . . ____ . . ____ . . ____' },
  { name: 'DIVIDE2', label: 'Divide (.5x) ', pattern: '__..__..__..__..__..__..__..__.._' },
  { name: 'DIVIDEX2', label: 'Divide (2x) ', pattern: '________  .  .  ________  .  .  _' },
  { name: 'DOT', label: 'Dot ', pattern: '. . . . . . . . . . . . . . . . . . . . . .' },
  { name: 'DOT2', label: 'Dot (.5x) ', pattern: '......................................' },
  { name: 'DOTX2', label: 'Dot (2x) ', pattern: '.  .  .  .  .  .  .  .  .  .  .  .  .' },
  { name: 'FENCELINE1', label: 'Fenceline circle ----0-----0----0-----0----0...' },
  { name: 'FENCELINE2', label: 'Fenceline square ----[]-----[]----[]-----[]----' },
  { name: 'GAS_LINE', label: 'Gas line ----GAS----GAS----GAS----GAS---...' },
  { name: 'HIDDEN', label: 'Hidden ', pattern: '__ __ __ __ __ __ __ __ __ __ __ __ _...' },
  { name: 'HIDDEN2', label: 'Hidden (.5x) ', pattern: '_ _ _ _ _ _ _ _ _ _ _ _ _ _ _ _ _' },
  { name: 'HIDDENX2', label: 'Hidden (2x) ', pattern: '____ ____ ____ ____ ____ ____...' },
  { name: 'HOT_WATER_...', label: 'Hot water supply ---- HW ---- HW ---- HW -...' },
  { name: 'PHANTOM', label: 'Phantom ', pattern: '______  __  __  ______  __  __  ____...' },
  { name: 'PHANTOM2', label: 'Phantom (.5x) ', pattern: '___ _ _ ___ _ _ ___ _ _ ___ _ _' },
  { name: 'PHANTOMX2', label: 'Phantom (2x) ', pattern: '____________    ____    ____   _' },
  { name: 'TRACKS', label: 'Tracks ', tracks: '-|'.repeat(20) },
  { name: 'ZIGZAG', label: 'Zig zag ', pattern: '/\\'.repeat(20) + '/' },
];

const selectedLinetypes = ['DIVIDE', 'HIDDEN'];

function TopBar() {
  return (
    <header className="h-[103px] shrink-0 border-b-2 border-[#222b38]">
      <div className="flex h-[34px] items-center">
        <div className="flex flex-1 gap-4 pl-[7px]">
          <span className="flex size-6 items-center justify-center rounded-full bg-[#83868d]">
            <span className="size-2 rounded-full bg-[#3a3d44]" />
          </span>
          <span className="size-6 rounded-full bg-[#83868d]" />
          <span className="size-6 rounded-full bg-[#83868d]" />
        </div>
        <h1 className="pr-4 whitespace-pre text-[26px] leading-8 font-bold text-[#a9adb5]">
          Autodesk AutoCAD 2023{'    '}Drawing1.dwg
        </h1>
        <div className="flex flex-1 justify-end self-stretch">
          <button className="relative flex h-[33px] w-[239px] items-center gap-3 border-2 border-t-0 border-[#2a323e] bg-[#4e586e] pl-3 text-[22px] leading-7 whitespace-nowrap text-[#eef0f3]">
            <svg viewBox="0 0 24 28" className="h-7 w-6 shrink-0" fill="none" stroke="#d9d9d9" strokeWidth="2">
              <circle cx="12" cy="5" r="5" />
              <path d="M1 27c0-16 22-16 22 0" />
            </svg>
            <span className="pb-2">Mafalda Concei...</span>
            <span className="absolute top-2 right-3">
              <Caret />
            </span>
          </button>
        </div>
      </div>
      <nav className="flex h-[68px] items-center pl-[417px]" aria-label="Toolbar">
        {toolbarGroups.map((group) => (
          <div key={group[0]} className="mr-[66px] flex">
            {group.map((name) => (
              <button key={name} aria-label={name} className="flex w-[65px] justify-center">
                <Icon name={name} />
              </button>
            ))}
          </div>
        ))}
      </nav>
    </header>
  );
}

function ToolPalette() {
  return (
    <aside className="flex w-[171px] shrink-0 flex-col">
      <div className="flex h-[46px] shrink-0">
        <button aria-label="2D tools" className="flex w-[56px] items-center pl-2">
          <Icon name="rectTool" />
        </button>
        <button aria-label="3D tools" className="flex w-[69px] items-center justify-center border-2 border-t-0 border-[#222b38] bg-[#2d313d]">
          <Icon name="cube" />
        </button>
        <button aria-label="More tool sets" className="flex-1 border-b-2 border-[#222b38]">
          <More />
        </button>
      </div>
      <div className="min-h-0 flex-1 overflow-hidden">
        {palettes.map((p) => (
          <section key={p.title} className="w-[163px] border-b-2 border-[#222b38] pb-[10px]">
            <h2 className="flex h-10 items-center gap-[9px] pt-[2px] text-[19px] font-medium text-[#eef0f3]">
              <Caret className="h-[9px] w-4 fill-[#eef0f3]" />
              <span className="flex-1">{p.title}</span>
              <Icon name="gear" className="mr-[3px] size-[18px]" />
            </h2>
            <div className="grid grid-cols-[60px_60px_60px] pl-[5px]">
              {p.tools.map((tool) => {
                const name = tool.replace('+', '');
                return (
                  <button key={tool} aria-label={name} className="h-16 pt-1">
                    <svg viewBox="0 0 40 40" className="size-10 overflow-visible">
                      {icons[name]}
                      {tool.endsWith('+') && <path d="M38 30v8h-8z" fill="#9b9ea6" />}
                    </svg>
                  </button>
                );
              })}
            </div>
          </section>
        ))}
      </div>
      <div className="flex h-[47px] shrink-0 items-center gap-9 pl-[21px]">
        <button aria-label="Add tool set">
          <svg viewBox="0 0 24 24" className="size-6" stroke="#d9d9d9" strokeWidth="2">
            <path d="M12 1v22M0 12h24" />
          </svg>
        </button>
        <button aria-label="Customize">
          <svg viewBox="0 0 28 22" className="h-[22px] w-7" fill="#d9d9d9">
            <path d="M6 1h20v2H6zM6 7h20v2H6zM0 12h18v4H0zM20 16l3-4 3 4zM6 19h20v2H6z" />
          </svg>
        </button>
      </div>
    </aside>
  );
}

function DrawingCanvas() {
  const history = ['[cu', 'Com', 'Com', 'Com', 'Com', 'Com', 'Com'];
  return (
    <div className="relative min-h-0 flex-1 overflow-hidden bg-[#383f4c]">
      <svg className="absolute inset-0 size-full" aria-label="Model space">
        <g transform="translate(-171 -149)">
          <path
            d="M610 461H2000M610 600H2000M610 739H2000M610 877H2000M610 1016H2000M622 1155H2000"
            stroke="#b9bfc7"
            strokeWidth="2"
          />
          <path d="M612 1056v90M622 1154h90M604 1145h17v17h-17z" stroke="#d9dde2" strokeWidth="2" fill="none" />
          <path d="M720 1126l26 26M746 1126l-26 26M614 1021l13 11 13-11M627 1032v14" stroke="#c4c8ce" strokeWidth="2" fill="none" />
          <circle cx="2294" cy="312" r="108" fill="none" stroke="#5a616b" strokeWidth="29" />
          <path d="M2243 261h103v103h-103z" fill="#b4b5ba" />
          <path d="M2263 281h63v64h-63z" fill="#a5adb6" />
          <g textAnchor="middle" fill="#b3b5b9" fontWeight="700" fontSize="46" fontFamily="Liberation Sans, sans-serif">
            <text x="2295" y="217">N</text>
            <text x="2182" y="329">W</text>
            <text x="2407" y="329">E</text>
            <text x="2295" y="442">S</text>
            <text x="2295" y="321" fontSize="23" fill="#5d6167" fontFamily="Roboto, sans-serif">TOP</text>
          </g>
          <rect x="2244" y="490" width="101" height="25" rx="9" fill="#737f87" />
          <text x="2253" y="511" fontSize="22" fontFamily="Liberation Sans, sans-serif" fill="#3a424c">WCS</text>
          <path d="M2318 497h16l-8 9z" stroke="#3a424c" strokeWidth="2" fill="#9aa3aa" />
        </g>
      </svg>
      <div className="relative flex items-center gap-[11px] pt-[10px] pl-[28px] font-['Open_Sans',sans-serif] text-2xl leading-8 text-[#9a9b98]">
        <span>+</span>
        <span className="ml-4 h-[28px] w-[2px] bg-[#8b8d8e]" />
        <span>Top</span>
        <span className="ml-1 h-[28px] w-[2px] bg-[#8b8d8e]" />
        <span>2D Wireframe</span>
      </div>
      <div className="absolute bottom-0 left-[644px] w-[800px]">
        <div className="ml-20 bg-[#3c4451] pt-2 pl-[10px] font-['DejaVu_Sans_Mono',monospace] text-lg leading-[30px] text-[#9a9fa8]">
          {history.map((h, i) => (
            <p key={i}>{h}</p>
          ))}
        </div>
        <label className="flex h-[51px] items-center bg-[#3c4451] pl-4 font-['DejaVu_Sans_Mono',monospace] text-lg text-[#a5a9b0]">
          <span className="w-9">&gt;_</span>
          <Caret className="h-2 w-[10px] fill-[#a5a9b0]" />
          <input
            className="ml-7 flex-1 bg-transparent font-['Roboto',sans-serif] text-[22px] font-bold text-[#e4e6e9] outline-none"
            defaultValue="LIN"
          />
        </label>
      </div>
    </div>
  );
}

function StatusBar() {
  const toggles = ['gridMode', 'snapMode', 'ortho', 'polar', 'dynInput', 'lineweight', 'checker', 'cycling', 'otrack', 'osnap', 'annoAll', 'annoAuto', 'annoScale'];
  return (
    <footer className="flex h-[47px] shrink-0 border-t-2 border-[#222b38] text-[22px] text-[#a5a9b0]">
      <button className="w-[121px] border-x-2 border-[#222b38] bg-[#4e5a70] font-semibold text-[#f2f4f6]">Model</button>
      <button aria-label="New layout" className="flex w-[46px] items-center justify-center border-r-2 border-[#222b38]">
        <svg viewBox="0 0 24 24" className="size-6" stroke="#d9d9d9" strokeWidth="2">
          <path d="M12 1v22M0 12h24" />
        </svg>
      </button>
      <button className="w-[117px] border-r-2 border-[#222b38]">A3</button>
      <button className="w-[117px] border-r-2 border-[#222b38]">Layout2</button>
      <div className="flex-1 border-r-2 border-[#222b38]" />
      <div className="flex items-center pr-3 pl-[22px]">
        <output className="mr-1 whitespace-pre text-[23px]">10.112, 1.328 , 0.000</output>
        {toggles.map((t) => (
          <button
            key={t}
            aria-label={t}
            className={
              t === 'osnap' || t === 'annoAll'
                ? 'mx-[2px] flex h-10 w-10 items-center justify-center bg-[#5f86b9]'
                : 'flex h-10 w-11 items-center justify-center'
            }
          >
            <Icon name={t} className="size-[30px]" />
          </button>
        ))}
        <button className="flex w-[50px] items-center gap-2 text-xl whitespace-nowrap">
          1:1 <Caret className="h-2 w-[10px] fill-[#d9d9d9]" />
        </button>
        <button aria-label="Workspace" className="flex w-[52px] justify-center">
          <Icon name="workspace" className="size-[30px]" />
        </button>
        <button aria-label="Settings" className="flex w-[38px] justify-center">
          <Icon name="gear" className="size-[30px]" />
        </button>
      </div>
    </footer>
  );
}

function Swatch() {
  return <span className="size-[18px] shrink-0 border-2 border-black bg-white" />;
}

function LayersPanel() {
  return (
    <section className="px-[18px]">
      <h2 className="flex h-8 items-center justify-between pl-[2px] text-[22px] font-medium text-[#eef0f3]">
        Layers
        <Icon name="dock" />
      </h2>
      <div className="mt-8 flex gap-4 pl-[10px]">
        {layerTools.map((t) => (
          <button key={t} aria-label={t}>
            <Icon name={t} />
          </button>
        ))}
      </div>
      <label className="mt-[23px] flex h-[52px] items-center rounded border-2 border-[#2f3743] bg-[#4e586b] pr-2 pl-5">
        <span className="size-4 rounded-full bg-[#d9d9d9]" />
        <svg viewBox="0 0 16 20" className="ml-[18px] h-5 w-4 shrink-0">{lock('#646c7a')}</svg>
        <svg viewBox="0 0 16 16" className="ml-[18px] size-4 shrink-0">{snow('#646c7a')}</svg>
        <span className="ml-4 flex"><Swatch /></span>
        <select aria-label="Current layer" className="ml-6 flex-1 appearance-none text-[21px] text-white">
          <option>0</option>
        </select>
        <Caret />
      </label>
      <label className="mt-1 mr-[2px] ml-[2px] flex h-[53px] items-center rounded border-2 border-[#2f3743] bg-[#4e586b] pr-2 pl-3">
        <select aria-label="Layer state" className="flex-1 appearance-none text-[21px] font-medium text-white">
          <option>Unsaved Layer State</option>
        </select>
        <Caret />
      </label>
      <button className="flex h-[52px] items-center gap-6 pl-[10px] text-[21px] text-[#c4c7cc]">
        <svg viewBox="0 0 16 10" className="h-[10px] w-4" fill="none" stroke="#c4c7cc" strokeWidth="2">
          <path d="M1 1l7 8 7-8" />
        </svg>
        Hide Layer List
      </button>
      <div className="mt-[2px] mr-1 ml-[3px] h-[418px] border-2 border-r-0 border-[#2a303c] bg-[#4e576a]">
        <table className="w-full table-fixed border-collapse text-white">
          <thead>
            <tr className="h-[47px] bg-[#2d303c]">
              <th className="w-[64px] border-r-2 border-[#282b36]">
                <svg viewBox="0 0 24 16" className="mx-auto h-4 w-6">
                  <path d="M0 8q12-16 24 0q-12 16-24 0z" fill={L} />
                  <circle cx="12" cy="8" r="5" fill="#2d303c" />
                  <circle cx="12" cy="8" r="3" fill={L} />
                </svg>
              </th>
              <th className="relative w-[115px] bg-[#4b576a] px-2">
                <div className="flex items-center justify-between text-[22px] font-semibold text-[#d9d9d9]">
                  <svg viewBox="0 0 16 16" className="size-4">
                    <path d="M1 1h14v14H1z" fill="none" stroke={L} strokeWidth="2" />
                    <path d="M1 1h14L1 15z" fill={L} />
                  </svg>
                  N...
                  <svg viewBox="0 0 12 16" className="mr-1 h-4 w-3" fill={L}>
                    <path d="M0 6l6-6 6 6zM0 10l6 6 6-6z" />
                  </svg>
                </div>
                <svg viewBox="0 0 12 9" className="absolute bottom-0 left-[50px] h-[9px] w-3">
                  <path d="M0 9c2-2 4-5 6-9 2 4 4 7 6 9z" fill="#4a90e8" />
                </svg>
              </th>
              <th className="w-[44px] border-r-2 border-[#282b36]">
                <svg viewBox="0 0 16 16" className="mx-auto size-[18px]">{snow(L)}</svg>
              </th>
              <th className="w-[44px] border-r-2 border-[#282b36]">
                <svg viewBox="0 0 16 20" className="mx-auto h-5 w-4">{lock(L)}</svg>
              </th>
              <th className="w-[94px] border-r-2 border-[#282b36]">
                <svg viewBox="0 0 18 16" className="mx-auto h-4 w-[18px]" fill={L}>
                  <path d="M0 0h18v2H0zM0 6h18v3H0zM0 12h18v4H0z" />
                </svg>
              </th>
              <th>
                <svg viewBox="0 0 18 16" className="mr-[10px] ml-auto h-4 w-[18px]" stroke={L} strokeWidth="2">
                  <path d="M0 1h18" strokeDasharray="2 2" />
                  <path d="M0 8h18" strokeDasharray="5 2" />
                  <path d="M0 15h18" />
                </svg>
              </th>
            </tr>
          </thead>
          <tbody>
            <tr className="h-[38px] bg-[#919daf] text-[22px]">
              <td><span className="ml-7 block size-4 rounded-full bg-[#d9d9d9]" /></td>
              <td>
                <span className="flex items-center gap-4"><Swatch />0</span>
              </td>
              <td />
              <td />
              <td className="pl-[14px] font-medium">De...</td>
              <td><span className="ml-[14px] block h-[2px] bg-white" /></td>
            </tr>
          </tbody>
        </table>
      </div>
      <div className="mr-1 ml-[3px] h-8 border border-t-0 border-[#363e4a] pt-[13px] pl-1">
        <div className="h-[10px] w-[351px] rounded-full bg-[#858c97]" />
      </div>
      <div className="flex h-[52px] items-center pl-[15px]">
        <div className="flex flex-1 gap-7">
          {['layerOutline', 'layerDetail', 'folder', 'folderFilter'].map((t) => (
            <button key={t} aria-label={t}>
              <Icon name={t} />
            </button>
          ))}
        </div>
        <button aria-label="Remove layer" className="mr-[34px] h-1 w-4 bg-[#858c97]" />
        <button aria-label="Columns" className="flex items-center gap-[6px] pr-[14px]">
          <svg viewBox="0 0 20 16" className="h-4 w-5" fill="none" stroke={L} strokeWidth="2">
            <path d="M1 1h18v14H1zM7 1v14M13 1v14" />
          </svg>
          <Caret className="h-[6px] w-[10px] fill-[#d9d9d9]" />
        </button>
      </div>
      <label className="mr-1 ml-[3px] flex h-10 items-center rounded-lg bg-white pl-2">
        <svg viewBox="0 0 36 24" className="h-6 w-9 shrink-0" fill="none" stroke="#222" strokeWidth="2">
          <circle cx="11" cy="11" r="9" />
          <path d="M17 18l7 6" strokeWidth="3" />
          <path d="M24 9l5 5 5-5" />
        </svg>
        <input
          aria-label="Search for layer"
          placeholder="Search for layer"
          className="ml-[10px] min-w-0 flex-1 text-[25px] outline-none placeholder:text-[#bdbdbd]"
        />
      </label>
    </section>
  );
}

const fieldStyle = 'flex h-9 items-center rounded-xs border-2 border-[#2f3743] bg-[#4e586b]';

function PropertyRow({ label, value, lead }: { label: string; value: string; lead?: ReactNode }) {
  return (
    <label className="flex h-[46px] items-center">
      <span className="w-[134px] shrink-0 text-right whitespace-nowrap">{label}</span>
      <span className={`${fieldStyle} ml-[20px] w-[208px] pr-2 pl-3`}>
        {lead}
        <select className="min-w-0 flex-1 appearance-none text-white">
          <option>{value}</option>
        </select>
        <Caret />
      </span>
    </label>
  );
}

function PropertiesPanel() {
  return (
    <section className="flex min-h-0 flex-1 flex-col">
      <div className="flex h-[34px] shrink-0 items-center pr-[14px] pl-[21px]">
        <h2 className="flex-1 text-[23px] font-medium text-[#eef0f3]">Properties</h2>
        <div className="mr-4 flex h-7 border-2 border-[#2a323e] text-lg leading-6">
          <button className="w-[56px] border-r-2 border-[#2a323e] text-[#7d838e]">All</button>
          <button className="w-[60px] bg-[#4b576c] text-[#f2f4f6]">My</button>
        </div>
        <button aria-label="Customize properties"><Icon name="propsEdit" /></button>
        <button aria-label="Dock properties" className="ml-4"><Icon name="dock" /></button>
      </div>
      <label className="mx-[21px] mt-4 flex h-[42px] shrink-0 items-center border-2 border-[#373f4b] bg-[#434b59] pr-2 pl-[10px]">
        <select disabled aria-label="Object" className="flex-1 appearance-none text-[22px] text-[#7d8490]">
          <option>Model Space</option>
        </select>
        <Caret className="h-2 w-3 fill-[#7d8490]" />
      </label>
      <div className="mt-2 mb-[16px] flex min-h-0 flex-1 overflow-hidden pl-[66px] text-[21px] text-[#d3d6da]">
        <div className="w-[362px] shrink-0">
          <PropertyRow label="Color" value="ByLayer" lead={<span className="mr-[22px] ml-1 flex"><Swatch /></span>} />
          <PropertyRow label="Layer" value="0" />
          <PropertyRow label="Linetype" value="ByLa..." lead={<span className="mr-[30px] h-[2px] w-16 bg-white" />} />
          <label className="flex h-[46px] items-center">
            <span className="w-[134px] text-right whitespace-nowrap">Linetype sc...</span>
            <input defaultValue="1.000" className={`${fieldStyle} ml-[20px] w-[208px] pl-[6px] text-white`} />
          </label>
          <PropertyRow label="Lineweight" value="ByLayer" />
          <div className="flex h-[46px] items-center">
            <label htmlFor="transparency" className="w-[134px] text-right whitespace-nowrap">Transparency</label>
            <span className="ml-[26px] flex h-8 w-[118px] items-end border-2 border-[#2f3743] border-l-[#5f8fe0] bg-[#4e586b]">
              <span className="mb-[2px] ml-[52px] h-3 w-[2px] shrink-0 bg-[#7d8696]" />
              <input id="transparency" defaultValue="0" className="h-full w-full min-w-0 pr-1 text-right text-white" />
            </span>
            <button aria-label="Transparency method" className={`${fieldStyle} ml-2 w-[76px] justify-between px-2`}>
              <Icon name="checker" className="size-8" />
              <Caret />
            </button>
          </div>
          <PropertyRow label="Text style" value="rd" />
          <PropertyRow label="Dimension s..." value="rd" />
          <PropertyRow label="Multileader..." value="Standard" />
          <PropertyRow label="Table style" value="Standard" />
          <PropertyRow label="Annotation s..." value="1:1" />
        </div>
        <div className="mt-1 ml-[15px] h-[308px] w-[9px] rounded-full bg-[#858c97]" />
      </div>
    </section>
  );
}

function Lights({ last }: { last: string }) {
  return (
    <div className="flex flex-1 gap-4">
      <span className="size-6 rounded-full border border-[#bdbdbd] bg-[#d2d2d2]" />
      <span className="size-6 rounded-full border border-[#bdbdbd] bg-[#d2d2d2]" />
      <span className={`size-6 rounded-full border ${last}`} />
    </div>
  );
}

function LinetypeManager() {
  const rows = [
    ['ByBlock', ''],
    ['ByLayer', ''],
    ['Continuous', 'Continuous'],
  ];
  return (
    <div
      role="dialog"
      aria-label="Linetype Manager"
      className="absolute top-[153px] left-[915px] h-[996px] w-[1090px] overflow-hidden rounded-[18px] bg-[#ececec] text-[25px] leading-8 text-[#262626] shadow-[0_16px_50px_rgba(0,0,0,0.5)]"
    >
      <div className="flex h-[57px] items-center border-b-2 border-[#cfcfcf] bg-[#ecebe9] px-4">
        <Lights last="border-[#bdbdbd] bg-[#d2d2d2]" />
        <h2 className="text-[26px] font-bold text-[#adadad]">Linetype Manager</h2>
        <div className="flex-1" />
      </div>
      <div className="px-[41px]">
        <label className="mt-10 flex items-center gap-4 pl-[102px]">
          Linetype filters:
          <span className="flex h-10 w-[522px] items-center rounded-[10px] bg-white pr-3 pl-4 shadow-[0_1px_3px_rgba(0,0,0,0.35)]">
            <select className="flex-1 appearance-none">
              <option>Show all linetypes</option>
            </select>
            <svg viewBox="0 0 14 22" className="h-[22px] w-[14px]" fill="none" stroke="#222" strokeWidth="3">
              <path d="M1 8l6-6 6 6M1 14l6 6 6-6" />
            </svg>
          </span>
        </label>
        <div className="mt-[41px] h-[228px] border-2 border-[#d0d0d0] bg-white">
          <table className="w-full table-fixed border-collapse">
            <thead>
              <tr className="h-[56px] border-b-2 border-[#e2e2e2] text-left text-[22px]">
                <th className="w-[48px]" />
                <th className="w-[207px] font-normal"><span className="block border-l-2 border-[#e2e2e2] pl-[9px]">Linetype</span></th>
                <th className="w-[395px] font-normal"><span className="block border-l-2 border-[#e2e2e2] pl-[9px]">Appearance</span></th>
                <th className="font-normal"><span className="block border-x-2 border-[#e2e2e2] pl-[9px]">Description</span></th>
              </tr>
            </thead>
            <tbody className="text-[26px]">
              {rows.map(([name, desc]) => (
                <tr key={name} className="h-[38px]">
                  <td>
                    {name === 'ByLayer' && (
                      <svg viewBox="0 0 16 28" className="ml-auto h-7 w-[18px]" fill="none" stroke="#777" strokeWidth="2">
                        <path d="M1 1l13 13L1 27" />
                      </svg>
                    )}
                  </td>
                  <td className="pl-[6px] leading-[38px]">{name}</td>
                  <td className="px-2"><div className="h-[2px] bg-black" /></td>
                  <td className="pl-[6px] leading-[38px]">{desc}</td>
                </tr>
              ))}
            </tbody>
          </table>
        </div>
        <div className="mt-4 flex h-[43px] w-[102px] border-2 border-[#b5b5b5] bg-[#f6f6f6]">
          <button aria-label="Add linetype" className="flex w-[48px] items-center justify-center bg-[#b2b2b2]">
            <svg viewBox="0 0 20 20" className="size-5" stroke="#222" strokeWidth="2">
              <path d="M10 0v20M0 10h20" />
            </svg>
          </button>
          <button aria-label="Remove linetype" className="flex flex-1 items-center justify-center">
            <span className="h-[2px] w-5 bg-[#222]" />
          </button>
        </div>
        <div className="mt-[50px] flex h-[363px] items-end justify-end rounded-lg border border-[#dcdcdc] bg-[#e4e4e4] pr-[41px] pb-7">
          scaling
        </div>
        <div className="mt-[40px] flex justify-end">
          <button className="h-10 w-[124px] rounded-[10px] bg-white shadow-[0_1px_3px_rgba(0,0,0,0.35)]">Save</button>
        </div>
      </div>
    </div>
  );
}

function LoadLinetypes() {
  return (
    <div
      role="dialog"
      aria-label="Load or Reload Linetypes"
      className="absolute top-[616px] left-[939px] flex h-[997px] w-[920px] flex-col overflow-hidden rounded-[20px] bg-[#ececec] bg-linear-to-b from-[#ececec] from-90% to-[#e0e0e0] text-[25px] leading-8 text-[#262626] shadow-[0_0_1px_1px_rgba(0,0,0,0.3),0_20px_70px_rgba(0,0,0,0.5)]"
    >
      <div className="flex h-[58px] shrink-0 items-center border-b-2 border-[#d0d0d0] bg-[#f4f4f4] px-4">
        <Lights last="border-[#55b04a] bg-[#62c655]" />
        <h2 className="text-[26px] font-bold text-[#454545]">Load or Reload Linetypes</h2>
        <div className="flex-1" />
      </div>
      <div className="flex flex-1 flex-col px-10">
        <div className="mt-[39px] flex items-start justify-between">
          <label className="flex h-10 w-[780px] items-center rounded-[10px] bg-white pr-1 pl-[19px] shadow-[0_1px_3px_rgba(0,0,0,0.35)]">
            <svg viewBox="0 0 26 30" className="mr-[11px] h-[30px] w-[26px]">
              <path d="M0 0h5v15H0z" fill="#b8385a" />
              <path d="M5 0h11l9 8v7H5z" fill="#fff" />
              <path d="M17 0l8 8h-8z" fill="#c4c4c4" />
              <path d="M0 14h25v16H0z" fill="#64142b" />
              <path d="M5 20h16v3H5z" fill="#fff" />
            </svg>
            <select aria-label="Linetype file" className="flex-1 appearance-none">
              <option>acad.lin</option>
            </select>
            <svg viewBox="0 0 32 32" className="size-8" fill="none">
              <rect width="32" height="32" rx="8" fill="#3c82f6" />
              <path d="M10 13l6-7 6 7M10 19l6 7 6-7" stroke="#fff" strokeWidth="3" />
            </svg>
          </label>
          <button aria-label="List options" className="flex h-[46px] w-11 items-center justify-center rounded-[10px] bg-white shadow-[0_1px_3px_rgba(0,0,0,0.35)]">
            <svg viewBox="0 0 20 14" className="h-[14px] w-5" stroke="#222" strokeWidth="2">
              <path d="M0 1h2m2 0h11M3 7h2m2 0h12M3 13h2m2 0h13" />
            </svg>
          </button>
        </div>
        <div className="mt-4 h-[734px] overflow-hidden border-2 border-[#e4e4e4] bg-[#fafafa]">
          <div className="flex">
            <table className="w-[806px] shrink-0 table-fixed border-collapse">
              <thead>
                <tr className="h-[57px] border-b-2 border-[#dcdcdc] text-left text-[22px]">
                  <th className="w-[214px] pl-5">
                    <span className="flex items-center justify-between pr-[14px]">
                      Linetype
                      <svg viewBox="0 0 14 8" className="h-2 w-[14px]" fill="none" stroke="#777" strokeWidth="2">
                        <path d="M1 7l6-6 6 6" />
                      </svg>
                    </span>
                  </th>
                  <th className="font-normal"><span className="block border-x-2 border-[#dcdcdc] pl-[10px]">Description</span></th>
                </tr>
              </thead>
              <tbody className="text-[26px]">
                {linetypes.map(({ name, label, pattern, tracks }, i) => {
                  const rowStyle = selectedLinetypes.includes(name)
                    ? 'bg-[#2860d8] text-white'
                    : i % 2 === 0
                      ? 'bg-[#f4f4f4]'
                      : 'bg-white';
                  return (
                    <tr key={name} className={`h-[38px] whitespace-pre ${rowStyle}`}>
                      <td className="pl-4 leading-[38px]">{name}</td>
                      <td className="pl-2 leading-[38px]">
                        {label}
                        {pattern && <span className="font-['Liberation_Sans',sans-serif]">{pattern}</span>}
                        {tracks && <span className="text-2xl leading-[38px]">{tracks}</span>}
                      </td>
                    </tr>
                  );
                })}
              </tbody>
            </table>
            <div className="flex-1 border-l-2 border-[#ececec] pl-[6px]">
              <div className="-ml-[6px] h-[57px] bg-white" />
              <div className="mt-[392px] h-[271px] w-4 rounded-full bg-[#c1c1c1]" />
            </div>
          </div>
        </div>
        <div className="mt-6 flex items-center">
          <button aria-label="Help" className="size-10 rounded-full bg-white font-medium shadow-[0_1px_3px_rgba(0,0,0,0.35)]">?</button>
          <div className="flex-1" />
          <button className="h-10 w-[110px] rounded-[10px] bg-white shadow-[0_1px_3px_rgba(0,0,0,0.35)]">Close</button>
          <button className="ml-6 h-10 w-[110px] rounded-[10px] bg-linear-to-b from-[#4a8ff7] to-[#3577f2] text-white shadow-[0_1px_3px_rgba(0,0,0,0.3)]">Add</button>
        </div>
      </div>
    </div>
  );
}

export default function App() {
  return (
    <div className="relative flex h-screen flex-col overflow-hidden bg-[#3c4451] font-['Inter',sans-serif]">
      <TopBar />
      <div className="flex min-h-0 flex-1">
        <ToolPalette />
        <div className="flex min-w-0 flex-1 flex-col">
          <div className="flex min-h-0 flex-1">
            <main className="flex min-w-0 flex-1 flex-col">
              <div className="flex h-[46px] shrink-0 border-b-2 border-[#222b38]">
                <button aria-label="Start" className="flex w-[50px] items-center justify-center border-x-2 border-[#222b38]">
                  <Icon name="grid4" />
                </button>
                <button aria-label="New drawing" className="flex w-[46px] items-center justify-center border-r-2 border-[#222b38]">
                  <svg viewBox="0 0 24 24" className="size-6" stroke="#d9d9d9" strokeWidth="2">
                    <path d="M12 1v22M0 12h24" />
                  </svg>
                </button>
                <button className="w-[258px] border-r-2 border-[#222b38] bg-[#4e5a70] pl-[6px] text-left text-[22px] font-semibold text-[#f2f4f6]">
                  Drawing1*
                </button>
              </div>
              <DrawingCanvas />
            </main>
            <aside className="flex w-[472px] shrink-0 flex-col">
              <div className="flex h-[46px] shrink-0 border-l-2 border-[#222b38]">
                <button aria-label="Layers" className="flex w-[102px] items-center justify-center">
                  <Icon name="layersTab" className="size-[30px]" />
                </button>
                <button aria-label="References" className="flex w-[106px] items-center justify-center border-x-2 border-b-2 border-[#222b38] bg-[#2d313d]">
                  <Icon name="attachTab" />
                </button>
                <button aria-label="Sheet sets" className="flex w-[105px] items-center justify-center border-r-2 border-b-2 border-[#222b38] bg-[#2d313d]">
                  <Icon name="sheetTab" />
                </button>
                <div className="w-[110px] border-r-2 border-b-2 border-[#222b38] bg-[#2d313d]" />
                <button aria-label="More palettes" className="flex-1 border-b-2 border-[#222b38]">
                  <More />
                </button>
              </div>
              <LayersPanel />
              <div className="mt-4 border-t-2 border-[#222b38]" />
              <PropertiesPanel />
            </aside>
          </div>
          <StatusBar />
        </div>
      </div>
      <div className="h-[5px] shrink-0 bg-linear-to-r from-[#4a4a2c] via-[#2a2a1e] to-[#4a4f3a]" />
      <LinetypeManager />
      <LoadLinetypes />
    </div>
  );
}
